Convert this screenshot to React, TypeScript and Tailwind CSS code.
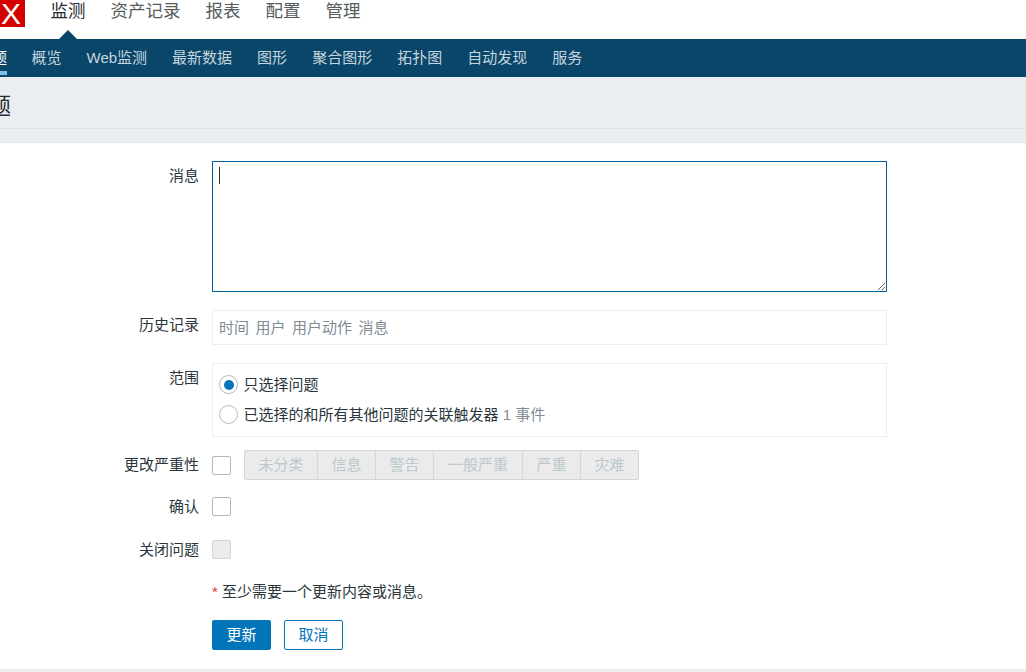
import React from "react";

const mainNav = ["监测", "资产记录", "报表", "配置", "管理"];
const subNav = ["概览", "Web监测", "最新数据", "图形", "聚合图形", "拓扑图", "自动发现", "服务"];
const severities = [
  { label: "未分类", width: "w-[72px]" },
  { label: "信息", width: "w-[58px]" },
  { label: "警告", width: "w-[58px]" },
  { label: "一般严重", width: "w-[89px]" },
  { label: "严重", width: "w-[58px]" },
  { label: "灾难", width: "w-[58px]" },
];

const FormRow: React.FC<{ label: string; labelClass?: string; className?: string; children: React.ReactNode }> = ({
  label,
  labelClass = "",
  className = "",
  children,
}) => (
  <div className={`flex ${className}`}>
    <label className={`w-[199px] shrink-0 text-right text-[15px] leading-[20px] text-[#2a363c] ${labelClass}`}>{label}</label>
    <div className="ml-[13px] w-[675px]">{children}</div>
  </div>
);

const Checkbox: React.FC<{ disabled?: boolean }> = ({ disabled }) => (
  <span
    className={`block h-[19px] w-[19px] rounded-[2px] border ${
      disabled ? "border-[#cfd8dc] bg-[#ebebeb]" : "border-[#acbbc2] bg-white"
    }`}
  />
);

const Radio: React.FC<{ checked?: boolean }> = ({ checked }) => (
  <span className="flex h-[19px] w-[19px] items-center justify-center rounded-full border border-[#acbbc2] bg-white">
    {checked && <span className="h-[10px] w-[10px] rounded-full bg-[#0275b8]" />}
  </span>
);

export default function App() {
  return (
    <div className="h-[672px] w-[1026px] overflow-hidden bg-white font-['Liberation_Sans','Noto_Sans_CJK_SC',sans-serif] text-[#2a363c]">
      {/* top menu */}
      <div className="relative flex h-[39px] items-start">
        <div className="flex h-[27px] w-[25px] items-center justify-center overflow-hidden bg-[#d40000] pr-[3px] text-[30px] leading-none text-white">
          X
        </div>
        <nav className="ml-[25.5px] flex gap-[25px] pt-[1px] text-[17.5px] leading-[20px] text-[#565c60]">
          {mainNav.map((item, i) => (
            <a key={item} className={i === 0 ? "text-[#1f2c33]" : ""}>
              {item}
            </a>
          ))}
        </nav>
        <span className="absolute left-[59px] top-[30px] h-0 w-0 border-x-[9px] border-b-[9px] border-x-transparent border-b-[#0a466a]" />
      </div>

      {/* sub menu */}
      <div className="flex h-[38px] bg-[#0a466a] text-[15px] text-[#c5d5de]">
        <div className="ml-[-8px] flex h-[37px] w-[15px] flex-col justify-between">
          <span className="pt-[9px] leading-[20px] text-white">题</span>
          <span className="mb-[1px] h-[4px] bg-[#7ac1ee]" />
        </div>
        <nav className="ml-[24.5px] flex gap-[25px] pt-[9px] leading-[20px]">
          {subNav.map((item) => (
            <a key={item}>{item}</a>
          ))}
        </nav>
      </div>

      {/* page title */}
      <div className="h-[52px] overflow-hidden border-b border-[#dfe4e7] bg-[#ebeef0]">
        <h1 className="ml-[-11.5px] pt-[16px] text-[22.5px] font-normal leading-[28px] text-[#1f2c33]">题</h1>
      </div>
      <div className="h-[14px] border-b border-[#dfe4e7] bg-[#ebeef0]" />

      {/* form */}
      <form className="h-[529px] border-b-[3px] border-[#ebeef0] pt-[18px]">
        <FormRow label="消息" labelClass="pt-[5px]">
          <div className="relative">
            <textarea className="block h-[131px] w-[675px] resize-y border border-[#00649a] bg-white outline-none" />
            <span className="absolute left-[7px] top-[6px] h-[17px] w-[1px] bg-[#1f2c33]" />
          </div>
        </FormRow>

        <FormRow label="历史记录" labelClass="pt-[5px]" className="mt-[18px]">
          <div className="flex h-[35px] items-center gap-[6.5px] border border-[#ebeef0] px-[6px] pt-[2px] text-[15px] text-[#7f8c94]">
            <span>时间</span>
            <span>用户</span>
            <span>用户动作</span>
            <span>消息</span>
          </div>
        </FormRow>

        <FormRow label="范围" labelClass="pt-[5px]" className="mt-[18px]">
          <div className="flex h-[74px] flex-col gap-[11px] border border-[#ebeef0] px-[6px] pt-[11px] text-[15px] leading-[19px]">
            <div className="flex items-center gap-[5.5px]">
              <Radio checked />
              <span>只选择问题</span>
            </div>
            <div className="flex items-center gap-[5.5px]">
              <Radio />
              <span>
                已选择的和所有其他问题的关联触发器 <span className="text-[#7f8c94]">1 事件</span>
              </span>
            </div>
          </div>
        </FormRow>

        <FormRow label="更改严重性" labelClass="pt-[5px]" className="mt-[13px]">
          <div className="flex h-[30px] items-center">
            <Checkbox />
            <div className="ml-[13px] flex h-[30px] overflow-hidden rounded-[2px] border border-[#cfd8dc] bg-[#ebebeb] text-[15px] text-[#bcc8ce]">
              {severities.map((s, i) => (
                <span
                  key={s.label}
                  className={`flex items-center justify-center ${s.width} ${i > 0 ? "border-l border-[#cfd8dc]" : ""}`}
                >
                  {s.label}
                </span>
              ))}
            </div>
          </div>
        </FormRow>

        <FormRow label="确认" className="mt-[17px]">
          <Checkbox />
        </FormRow>

        <FormRow label="关闭问题" className="mt-[23px]">
          <Checkbox disabled />
        </FormRow>

        <div className="ml-[212px] mt-[22px] text-[15px] leading-[20px]">
          <span className="text-[#e33734]">*</span> 至少需要一个更新内容或消息。
        </div>

        <div className="ml-[212px] mt-[18px] flex gap-[13px] text-[15px]">
          <button type="button" className="h-[30px] w-[59px] rounded-[2px] bg-[#0275b8] text-white">
            更新
          </button>
          <button type="button" className="h-[30px] w-[59px] rounded-[2px] border border-[#0275b8] bg-white text-[#0275b8]">
            取消
          </button>
        </div>
      </form>
    </div>
  );
}
